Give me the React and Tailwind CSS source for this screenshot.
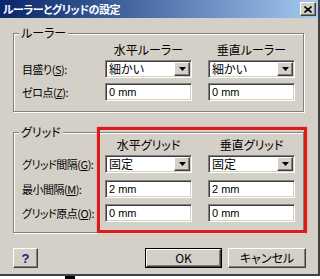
const sunken =
  "border border-t-[#808080] border-l-[#808080] border-r-white border-b-white shadow-[inset_1px_1px_0_#404040,inset_-1px_-1px_0_#d4d0c8]";
const raised =
  "border border-t-white border-l-white border-r-[#404040] border-b-[#404040] shadow-[inset_-1px_-1px_0_#808080]";

function Select({ value }) {
  return (
    <div className={`flex h-[18px] w-[87px] bg-white p-px ${sunken}`}>
      <span className="flex-1 pl-[2px] leading-[14px]">{value}</span>
      <span className={`flex w-[16px] items-center justify-center bg-[#d4d0c8] ${raised}`}>
        <svg width="7" height="4" viewBox="0 0 7 4">
          <path d="M0 0h7L3.5 4z" fill="#000" />
        </svg>
      </span>
    </div>
  );
}

function Field({ value }) {
  return (
    <div className={`flex h-[18px] w-[87px] items-center bg-white pl-[3px] ${sunken}`}>
      <span className="font-['Liberation_Sans',sans-serif] text-[11px] leading-[14px]">{value}</span>
    </div>
  );
}

function Row({ label, children, className = "" }) {
  return (
    <div className={`flex items-center ${className}`}>
      <div className="w-[83px] text-[11px] leading-[14px] tracking-[-0.5px] whitespace-nowrap">{label}</div>
      <div className="flex gap-[16px]">{children}</div>
    </div>
  );
}

function Label({ text, keyChar }) {
  return (
    <>
      {text}(<span className="underline">{keyChar}</span>):
    </>
  );
}

function Group({ title, children, className = "" }) {
  return (
    <fieldset
      className={`ml-[13px] w-[291px] border border-[#808080] shadow-[inset_1px_1px_0_#fff,1px_1px_0_#fff] ${className}`}
    >
      <legend className="ml-[5px] bg-[#d4d0c8] px-[2px] leading-[14px]">{title}</legend>
      <div className="px-[8px]">{children}</div>
    </fieldset>
  );
}

function Headers({ left, right, className = "" }) {
  return (
    <div className={`flex h-[14px] items-center leading-[14px] ${className}`}>
      <div className="w-[83px]" />
      <div className="flex gap-[16px]">
        <div className="w-[87px] text-center whitespace-nowrap">{left}</div>
        <div className="w-[87px] text-center whitespace-nowrap">{right}</div>
      </div>
    </div>
  );
}

export default function App() {
  return (
    <div className="relative h-[279px] w-[320px] overflow-hidden bg-white font-['Noto_Sans_CJK_JP',sans-serif] text-[12px] text-black [font-feature-settings:'palt']">
      <div className="h-[276px] w-[320px] border-r-2 border-b-2 border-r-[#404040] border-b-[#404040] bg-[#d4d0c8]">
        {/* title bar */}
        <div className="flex h-[18px] items-center justify-between bg-gradient-to-r from-[#0a246a] to-[#a6caf0] pr-[2px] pl-[3px]">
          <span className="text-[11px] leading-[14px] font-bold tracking-[-0.5px] text-white">ルーラーとグリッドの設定</span>
          <button className={`flex h-[14px] w-[16px] items-center justify-center bg-[#d4d0c8] ${raised}`}>
            <svg width="8" height="7" viewBox="0 0 8 7">
              <path d="M0.5 0.5L7.5 6.5M7.5 0.5L0.5 6.5" stroke="#000" strokeWidth="1.6" />
            </svg>
          </button>
        </div>

        <Group title="ルーラー" className="mt-[8px]">
          <Headers left="水平ルーラー" right="垂直ルーラー" className="mt-[3px]" />
          <Row label={<Label text="目盛り" keyChar="S" />} className="mt-[3px]">
            <Select value="細かい" />
            <Select value="細かい" />
          </Row>
          <Row label={<Label text="ゼロ点" keyChar="Z" />} className="mt-[5px] pb-[10px]">
            <Field value="0 mm" />
            <Field value="0 mm" />
          </Row>
        </Group>

        <Group title="グリッド" className="mt-[13px]">
          <Headers left="水平グリッド" right="垂直グリッド" className="-mt-px" />
          <Row label={<Label text="グリッド間隔" keyChar="G" />} className="mt-[3px]">
            <Select value="固定" />
            <Select value="固定" />
          </Row>
          <Row label={<Label text="最小間隔" keyChar="M" />} className="mt-[7px]">
            <Field value="2 mm" />
            <Field value="2 mm" />
          </Row>
          <Row label={<Label text="グリッド原点" keyChar="O" />} className="mt-[6px] pb-[10px]">
            <Field value="0 mm" />
            <Field value="0 mm" />
          </Row>
        </Group>

        <div className="mt-[15px] ml-[13px] flex">
          <button className={`flex h-[20px] w-[25px] items-center justify-center bg-[#d4d0c8] ${raised}`}>
            <span className="font-['Liberation_Sans',sans-serif] text-[13px] leading-none font-bold text-[#1a1a8c]">?</span>
          </button>
          <button className="ml-[107px] h-[20px] w-[77px] border border-black bg-[#d4d0c8]">
            <span className={`flex h-full w-full items-center justify-center ${raised}`}>OK</span>
          </button>
          <button className={`ml-[6px] flex h-[20px] w-[78px] items-center justify-center bg-[#d4d0c8] ${raised}`}>
            キャンセル
          </button>
        </div>
      </div>
      <div className="ml-[65px] h-[3px] w-[10px] bg-black" />

      {/* red annotation box */}
      <div className="pointer-events-none absolute top-[127px] left-[97px] h-[106px] w-[210px] border-[3px] border-[#d91c1c] shadow-[0_0_2px_#f08080]" />
    </div>
  );
}
